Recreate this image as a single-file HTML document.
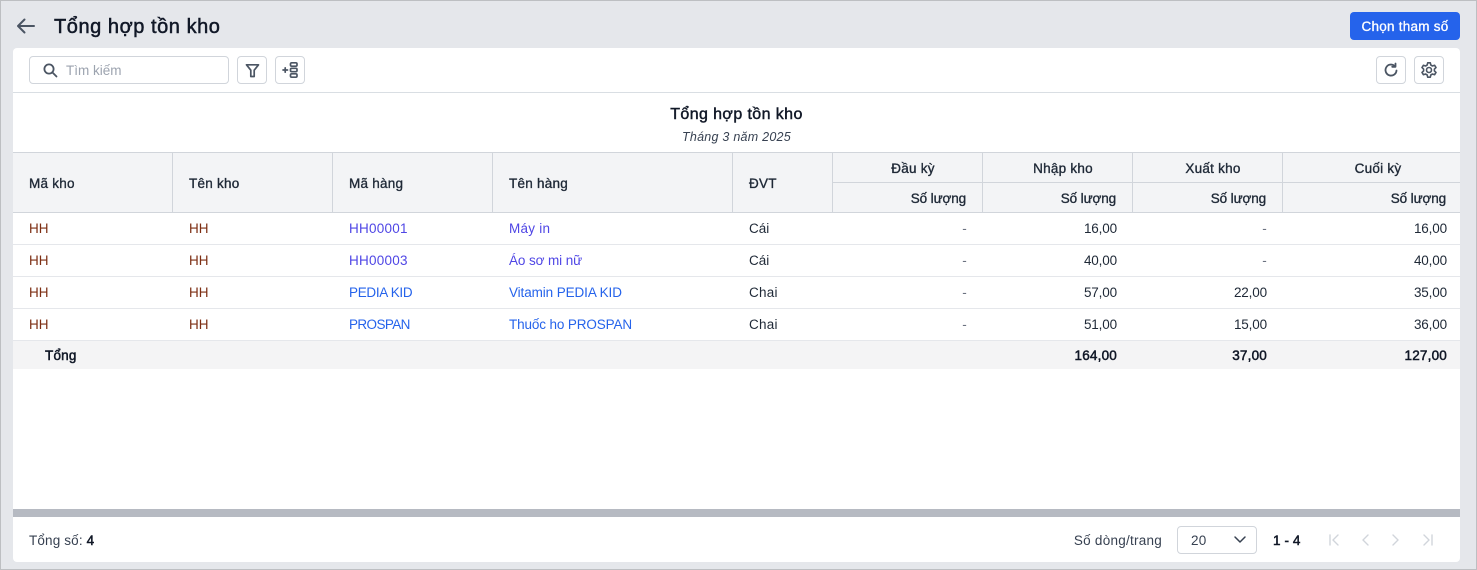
<!DOCTYPE html>
<html lang="vi"><head><meta charset="utf-8"><title>Tổng hợp tồn kho</title>
<style>
*{box-sizing:border-box;margin:0;padding:0}
html,body{width:1477px;height:570px;overflow:hidden;background:#e5e7eb;font-family:"Liberation Sans","DejaVu Sans",sans-serif;font-size:13.5px;color:#1f2937}
.a{position:absolute}
.t{position:absolute;white-space:nowrap;line-height:16px;letter-spacing:.25px}
.r{text-align:right}
.c{text-align:center}
.n{letter-spacing:-.15px}
.h{font-weight:400;-webkit-text-stroke:.35px;color:#1f2937}
.s{letter-spacing:-.12px}
.b{-webkit-text-stroke:.5px;color:#111827;letter-spacing:.2px}
.l{background:#d1d5db}
.row{background:#e5e7eb}
.btn{position:absolute;top:8px;width:30px;height:28px;background:#fff;border:1px solid #d1d5db;border-radius:4px}
.hh{color:#7c2d12;letter-spacing:0}
.lk{color:#4f46e5}
.lk2{color:#2563eb}
svg{position:absolute;fill:none}
</style></head><body>
<div class="a" style="left:0;top:0;width:1477px;height:1px;background:#bdbfc2"></div>
<div class="a" style="left:0;top:0;width:1px;height:570px;background:#bdbfc2"></div>
<div class="a" style="left:0;top:569px;width:1477px;height:1px;background:#bdbfc2"></div>
<div class="a" style="left:1476px;top:0;width:1px;height:570px;background:#bdbfc2"></div>

<svg style="left:16px;top:16px" width="20" height="20" viewBox="0 0 20 20" stroke="#4b5563" stroke-width="2" stroke-linecap="round" stroke-linejoin="round"><path d="M2 10H18M8.500 3.500L2 10L8.500 16.500"/></svg>
<div class="t" style="left:54px;top:15px;line-height:24px;font-size:20px;letter-spacing:.55px;color:#111827;-webkit-text-stroke:.5px">Tổng hợp tồn kho</div>
<div class="a c" style="left:1350px;top:12px;width:110px;height:28px;background:#2563eb;border-radius:4px;color:#fff;line-height:29px;letter-spacing:.25px;-webkit-text-stroke:.3px">Chọn tham số</div>

<div class="a" style="left:13px;top:48px;width:1447px;height:514px;background:#fff;border-radius:4px;overflow:hidden">
  <div class="a" style="left:16px;top:8px;width:200px;height:28px;border:1px solid #d1d5db;border-radius:4px"></div>
  <svg style="left:30px;top:15px" width="15" height="15" viewBox="0 0 15 15" stroke="#4b5563" stroke-width="1.800" stroke-linecap="round"><circle cx="6" cy="6" r="4.600"/><path d="M9.500 9.500L13.500 13.500"/></svg>
  <div class="t" style="left:53px;top:15px;color:#9ca3af;letter-spacing:0">Tìm kiếm</div>
  <div class="btn" style="left:224px"></div>
  <svg style="left:232px;top:15px" width="15" height="15" viewBox="0 0 15 15" stroke="#4b5563" stroke-width="1.700" stroke-linejoin="round"><path d="M1.500 1.800H13.500L9.200 7.200V13.500L5.800 13.500V7.200Z"/></svg>
  <div class="btn" style="left:262px"></div>
  <svg style="left:269px;top:13px" width="17" height="18" viewBox="0 0 17 18" stroke="#4b5563" stroke-width="1.700" stroke-linecap="round"><path d="M1 9H5.500M3.200 6.800V11.200"/><rect x="8.500" y="1.800" width="6.500" height="3.400" rx="1.200"/><rect x="8.500" y="7.300" width="6.500" height="3.400" rx="1.200"/><rect x="8.500" y="12.800" width="6.500" height="3.400" rx="1.200"/></svg>
  <div class="btn" style="left:1363px"></div>
  <svg style="left:1370px;top:14px" width="16" height="16" viewBox="0 0 16 16" stroke="#4b5563" stroke-width="1.800" stroke-linecap="round" stroke-linejoin="round"><path d="M13.500 8.500A5.500 5.500 0 1 1 11.500 3.800"/><path d="M12.500 1.500V4.800H9.200"/></svg>
  <div class="btn" style="left:1401px"></div>
  <svg style="left:1408px;top:14px" width="16" height="16" viewBox="0 0 16 16" stroke="#4b5563" stroke-width="1.600" stroke-linejoin="round"><path d="M6.700 .8H9.300L9.800 3L11.500 4L13.600 3.300L15 5.600L13.400 7.100V8.900L15 10.400L13.600 12.700L11.500 12L9.800 13L9.300 15.200H6.700L6.200 13L4.500 12L2.400 12.700L1 10.400L2.600 8.900V7.100L1 5.600L2.400 3.300L4.500 4L6.200 3Z"/><circle cx="8" cy="8" r="2.500"/></svg>
  <div class="a" style="left:0;top:44px;width:1447px;height:1px;background:#d9dee3"></div>

  <div class="t c" style="left:0;width:1447px;top:58px;font-size:16px;line-height:18px;letter-spacing:.4px;color:#111827;-webkit-text-stroke:.45px">Tổng hợp tồn kho</div>
  <div class="t c" style="left:0;width:1447px;top:81px;font-size:12.500px;font-style:italic;color:#374151">Tháng 3 năm 2025</div>

  <div class="a" style="left:0;top:104px;width:1447px;height:61px;background:#f3f4f6"></div>
  <div class="a l" style="left:0;top:104px;width:1447px;height:1px"></div>
  <div class="a l" style="left:0;top:164px;width:1447px;height:1px"></div>
  <div class="a l" style="left:819px;top:134px;width:628px;height:1px"></div>
  <div class="a l" style="left:159px;top:105px;width:1px;height:59px"></div>
  <div class="a l" style="left:319px;top:105px;width:1px;height:59px"></div>
  <div class="a l" style="left:479px;top:105px;width:1px;height:59px"></div>
  <div class="a l" style="left:719px;top:105px;width:1px;height:59px"></div>
  <div class="a l" style="left:819px;top:105px;width:1px;height:59px"></div>
  <div class="a l" style="left:969px;top:105px;width:1px;height:59px"></div>
  <div class="a l" style="left:1119px;top:105px;width:1px;height:59px"></div>
  <div class="a l" style="left:1269px;top:105px;width:1px;height:59px"></div>

  <div class="t h" style="left:16px;top:128px">Mã kho</div>
  <div class="t h" style="left:176px;top:128px">Tên kho</div>
  <div class="t h" style="left:336px;top:128px">Mã hàng</div>
  <div class="t h" style="left:496px;top:128px">Tên hàng</div>
  <div class="t h" style="left:736px;top:128px">ĐVT</div>
  <div class="t h c" style="left:820px;width:160px;top:113px">Đầu kỳ</div>
  <div class="t h c" style="left:970px;width:160px;top:113px">Nhập kho</div>
  <div class="t h c" style="left:1120px;width:160px;top:113px">Xuất kho</div>
  <div class="t h c" style="left:1270px;width:190px;top:113px">Cuối kỳ</div>
  <div class="t h r s" style="left:820px;width:133px;top:143px">Số lượng</div>
  <div class="t h r s" style="left:970px;width:133px;top:143px">Số lượng</div>
  <div class="t h r s" style="left:1120px;width:133px;top:143px">Số lượng</div>
  <div class="t h r s" style="left:1270px;width:163px;top:143px">Số lượng</div>

  <div class="t hh" style="left:16px;top:173px">HH</div><div class="t hh" style="left:176px;top:173px">HH</div>
  <div class="t lk" style="left:336px;top:173px">HH00001</div><div class="t lk" style="left:496px;top:173px">Máy in</div>
  <div class="t" style="left:736px;top:173px;letter-spacing:0">Cái</div>
  <div class="t r" style="left:820px;width:134px;top:173px;color:#6b7280">-</div>
  <div class="t r n" style="left:970px;width:134px;top:173px">16,00</div>
  <div class="t r" style="left:1120px;width:134px;top:173px;color:#6b7280">-</div>
  <div class="t r n" style="left:1270px;width:164px;top:173px">16,00</div>
  <div class="a row" style="left:0;top:196px;width:1447px;height:1px"></div>

  <div class="t hh" style="left:16px;top:205px">HH</div><div class="t hh" style="left:176px;top:205px">HH</div>
  <div class="t lk" style="left:336px;top:205px">HH00003</div><div class="t lk" style="left:496px;top:205px;letter-spacing:-.1px">Áo sơ mi nữ</div>
  <div class="t" style="left:736px;top:205px;letter-spacing:0">Cái</div>
  <div class="t r" style="left:820px;width:134px;top:205px;color:#6b7280">-</div>
  <div class="t r n" style="left:970px;width:134px;top:205px">40,00</div>
  <div class="t r" style="left:1120px;width:134px;top:205px;color:#6b7280">-</div>
  <div class="t r n" style="left:1270px;width:164px;top:205px">40,00</div>
  <div class="a row" style="left:0;top:228px;width:1447px;height:1px"></div>

  <div class="t hh" style="left:16px;top:237px">HH</div><div class="t hh" style="left:176px;top:237px">HH</div>
  <div class="t lk2" style="left:336px;top:237px;letter-spacing:-.3px">PEDIA KID</div><div class="t lk2" style="left:496px;top:237px;letter-spacing:-.1px">Vitamin PEDIA KID</div>
  <div class="t" style="left:736px;top:237px">Chai</div>
  <div class="t r" style="left:820px;width:134px;top:237px;color:#6b7280">-</div>
  <div class="t r n" style="left:970px;width:134px;top:237px">57,00</div>
  <div class="t r n" style="left:1120px;width:134px;top:237px">22,00</div>
  <div class="t r n" style="left:1270px;width:164px;top:237px">35,00</div>
  <div class="a row" style="left:0;top:260px;width:1447px;height:1px"></div>

  <div class="t hh" style="left:16px;top:269px">HH</div><div class="t hh" style="left:176px;top:269px">HH</div>
  <div class="t lk2" style="left:336px;top:269px;letter-spacing:-.6px">PROSPAN</div><div class="t lk2" style="left:496px;top:269px;letter-spacing:-.13px">Thuốc ho PROSPAN</div>
  <div class="t" style="left:736px;top:269px">Chai</div>
  <div class="t r" style="left:820px;width:134px;top:269px;color:#6b7280">-</div>
  <div class="t r n" style="left:970px;width:134px;top:269px">51,00</div>
  <div class="t r n" style="left:1120px;width:134px;top:269px">15,00</div>
  <div class="t r n" style="left:1270px;width:164px;top:269px">36,00</div>
  <div class="a row" style="left:0;top:292px;width:1447px;height:1px"></div>

  <div class="a" style="left:0;top:293px;width:1447px;height:28px;background:#f4f4f5"></div>
  <div class="t b" style="left:32px;top:300px">Tổng</div>
  <div class="t r b" style="left:970px;width:134px;top:300px">164,00</div>
  <div class="t r b" style="left:1120px;width:134px;top:300px">37,00</div>
  <div class="t r b" style="left:1270px;width:164px;top:300px">127,00</div>

  <div class="a" style="left:0;top:461px;width:1447px;height:8px;background:#b6bac2"></div>

  <div class="t" style="left:16px;top:485px;color:#374151;letter-spacing:.15px">Tổng số: <span class="b">4</span></div>
  <div class="t r" style="left:1000px;width:149px;top:485px;color:#374151">Số dòng/trang</div>
  <div class="a" style="left:1164px;top:478px;width:80px;height:28px;border:1px solid #d1d5db;border-radius:4px"></div>
  <div class="t" style="left:1178px;top:485px;color:#374151">20</div>
  <svg style="left:1220px;top:486px" width="14" height="12" viewBox="0 0 14 12" stroke="#374151" stroke-width="1.500" stroke-linecap="round" stroke-linejoin="round"><path d="M2 3L7 8L12 3"/></svg>
  <div class="t b" style="left:1260px;top:485px;letter-spacing:.1px">1 - 4</div>
  <svg style="left:1312px;top:485px" width="112" height="14" viewBox="0 0 112 14" stroke="#d1d5db" stroke-width="1.400" stroke-linecap="round" stroke-linejoin="round"><path d="M5 2V12M13 2L8 7L13 12M43 2L38 7L43 12M68 2L73 7L68 12M99 2L104 7L99 12M107 2V12"/></svg>
</div>
</body></html>
